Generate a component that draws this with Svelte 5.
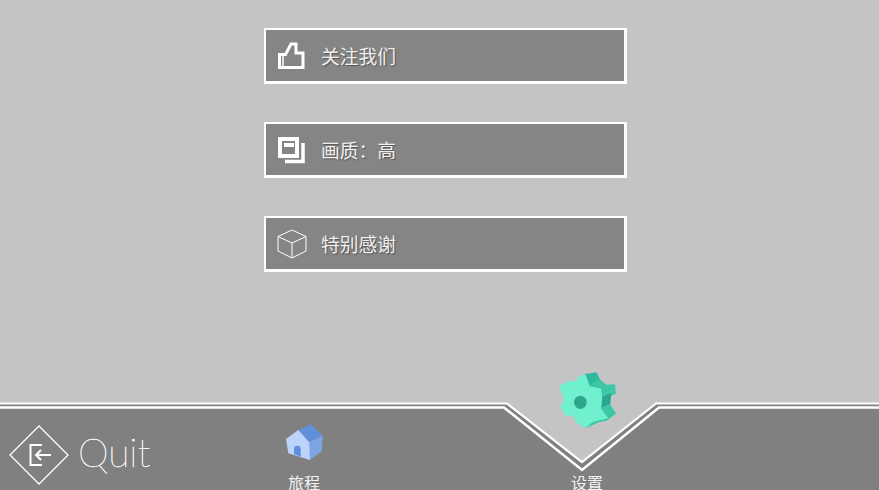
<script>
  const items = [
    { text: '关注我们', icon: 'like' },
    { text: '画质\uFF1A高', icon: 'quality' },
    { text: '特别感谢', icon: 'cube' }
  ];
</script>

<div class="page">
  <main class="menu">
    {#each items as item}
      <button class="row">
        <span class="ico">
          {#if item.icon === 'like'}
            <svg viewBox="0 0 30 30" width="30" height="30">
              <path d="M2.500 13.500H8.500L14 3H19V12H26V26.500H2.500Z" fill="none" stroke="#fff" stroke-width="3"/>
              <path d="M6 14V26" fill="none" stroke="#fff" stroke-width="1.500"/>
            </svg>
          {:else if item.icon === 'quality'}
            <svg viewBox="0 0 30 30" width="30" height="30">
              <path d="M3 4H20V21H3Z" fill="none" stroke="#fff" stroke-width="4"/>
              <path d="M7 8H17V12H7Z" fill="#fff"/>
              <path d="M26 8V26.500H8" fill="none" stroke="#fff" stroke-width="3.500"/>
            </svg>
          {:else}
            <svg viewBox="0 0 30 30" width="30" height="30">
              <path d="M15 1L29 7.500V22L15 29L1 22V7.500ZM1 7.500L15 14L29 7.500M15 14V29" fill="none" stroke="#fff" stroke-width="1"/>
            </svg>
          {/if}
        </span>
        <span class="label">{item.text}</span>
      </button>
    {/each}
  </main>

  <footer class="bar">
    <svg class="bar-bg" viewBox="0 0 879 120" width="879" height="120">
      <path d="M0 33.500H507L582 92L656 33.500H879V120H0Z" fill="#808080"/>
      <path d="M0 37.500H504L582 100L659 37.500H879" fill="none" stroke="#fff" stroke-width="2.500"/>
      <path d="M0 33.500H507L582 92L656 33.500H879" fill="none" stroke="#fff" stroke-width="2.200"/>
    </svg>

    <div class="quit">
      <svg viewBox="0 0 60 60" width="60" height="60">
        <path d="M30 1L59 30L30 59L1 30Z" fill="none" stroke="#fff" stroke-width="1.300"/>
        <path d="M33 20H21.500V40H33" fill="none" stroke="#fff" stroke-width="2"/>
        <path d="M42 30H27M32 25L27 30L32 35" fill="none" stroke="#fff" stroke-width="2"/>
      </svg>
      <span class="quit-text">Quit</span>
    </div>

    <div class="tab home">
      <svg viewBox="0 0 40 40" width="40" height="40">
        <path d="M14.300 6L26.700 0.300L38.700 11.700L25.300 18.300Z" fill="#5f90d8"/>
        <path d="M25.300 18.300L38.700 11.700L37.700 27L26 36Z" fill="#7ca5e4"/>
        <path d="M2 15L14.300 6L25.300 18.300L26 36L4.300 29.300Z" fill="#bcd3fb"/>
        <path d="M10 30V25Q10 21.700 13.500 21.700Q16.700 21.700 16.700 25V32.700Z" fill="#5f8fd9"/>
      </svg>
      <span class="tab-label">旅程</span>
    </div>

    <div class="tab gear">
      <svg viewBox="0 0 216 210" width="72" height="70">
        <g stroke-linejoin="round" stroke-width="5">
          <path d="M100 30L135 24L145 45L115 66Z" fill="#2fb89a" stroke="#2fb89a"/>
          <path d="M112 66L145 45L165 62L190 60L192 85L150 102Z" fill="#3cc7a8" stroke="#3cc7a8"/>
          <path d="M150 100L178 88L175 122L150 135Z" fill="#2aa78c" stroke="#2aa78c"/>
          <path d="M148 132L175 120L192 145L165 165L140 170L105 187L120 150Z" fill="#3cc7a8" stroke="#3cc7a8"/>
          <path d="M28 62L62 49L78 52L82 38L102 31L114 66L148 72L151 100L148 132L168 158L138 165L122 170L105 186L78 172L68 150L45 150L31 125L42 105Z" fill="#70f0cf" stroke="#70f0cf"/>
        </g>
        <ellipse cx="88" cy="112" rx="19" ry="20" fill="#2da88c"/>
      </svg>
      <span class="tab-label">设置</span>
    </div>
  </footer>
</div>

<style>
  :global(body) {
    margin: 0;
    background: #c4c4c4;
  }
  .page {
    width: 879px;
    height: 490px;
    overflow: hidden;
    display: flex;
    flex-direction: column;
    justify-content: space-between;
    font-family: "Noto Sans CJK SC", "Liberation Sans", sans-serif;
  }
  .menu {
    display: flex;
    flex-direction: column;
    gap: 38px;
    padding: 28px 0 0 264px;
  }
  .row {
    box-sizing: border-box;
    width: 363px;
    height: 56px;
    padding: 0 0 0 11px;
    display: flex;
    align-items: center;
    gap: 14px;
    background: #858585;
    border-style: solid;
    border-color: #fff;
    border-width: 2px 3px 3px 2px;
    border-radius: 0;
    font: inherit;
    color: #f0f0f0;
  }
  .ico {
    display: flex;
    width: 30px;
    height: 30px;
  }
  .label {
    font-size: 18.750px;
    line-height: 24px;
    text-shadow: 1px 1px 1px rgba(50, 50, 50, 0.6);
  }
  .bar {
    position: relative;
    height: 120px;
    display: flex;
    align-items: flex-end;
  }
  .bar-bg {
    position: absolute;
    inset: 0;
  }
  .quit {
    position: relative;
    display: flex;
    align-items: center;
    gap: 9px;
    width: 268px;
    margin: 0 0 5px 9px;
  }
  .quit-text {
    font-family: "Lato", "Roboto", sans-serif;
    font-weight: 100;
    font-size: 39px;
    line-height: 50px;
    margin-bottom: 7px;
    color: #fff;
    -webkit-text-stroke: 0.4px #fff;
  }
  .tab {
    position: relative;
    display: flex;
    flex-direction: column;
    align-items: center;
    color: #f2f2f2;
  }
  .tab-label {
    font-size: 16px;
    line-height: 18px;
    height: 17px;
  }
  .home {
    width: 40px;
    margin-left: 7px;
  }
  .home svg {
    margin-bottom: 9px;
  }
  .gear {
    width: 72px;
    margin-left: 227px;
  }
  .gear svg {
    margin-bottom: 38px;
  }
</style>
